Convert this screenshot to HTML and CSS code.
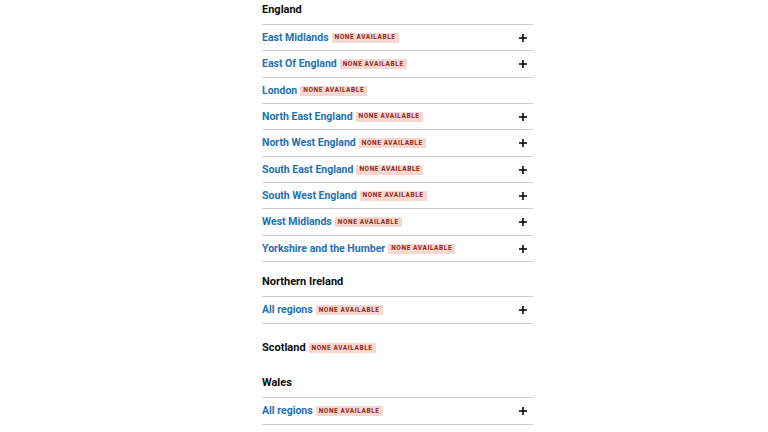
FILE: index.html
```html
<!DOCTYPE html>
<html lang="en">
<head>
<meta charset="utf-8">
<title>Regions</title>
<link rel="stylesheet" href="styles.css">
</head>
<body>
<main class="page">
  <section class="nation">
    <h2 class="nation-title">England</h2>
    <ul class="regions">
      <li class="region"><span class="region-name"><a class="link" href="#">East Midlands</a><strong class="tag">None available</strong></span><span class="plus"><svg viewBox="0 0 8 8" width="8" height="8"><rect x="3.2" y="0" width="1.6" height="8"/><rect x="0" y="3.2" width="8" height="1.6"/></svg></span></li>
      <li class="region"><span class="region-name"><a class="link" href="#">East Of England</a><strong class="tag">None available</strong></span><span class="plus"><svg viewBox="0 0 8 8" width="8" height="8"><rect x="3.2" y="0" width="1.6" height="8"/><rect x="0" y="3.2" width="8" height="1.6"/></svg></span></li>
      <li class="region"><span class="region-name"><a class="link" href="#">London</a><strong class="tag">None available</strong></span></li>
      <li class="region"><span class="region-name"><a class="link" href="#">North East England</a><strong class="tag">None available</strong></span><span class="plus"><svg viewBox="0 0 8 8" width="8" height="8"><rect x="3.2" y="0" width="1.6" height="8"/><rect x="0" y="3.2" width="8" height="1.6"/></svg></span></li>
      <li class="region"><span class="region-name"><a class="link" href="#">North West England</a><strong class="tag">None available</strong></span><span class="plus"><svg viewBox="0 0 8 8" width="8" height="8"><rect x="3.2" y="0" width="1.6" height="8"/><rect x="0" y="3.2" width="8" height="1.6"/></svg></span></li>
      <li class="region"><span class="region-name"><a class="link" href="#">South East England</a><strong class="tag">None available</strong></span><span class="plus"><svg viewBox="0 0 8 8" width="8" height="8"><rect x="3.2" y="0" width="1.6" height="8"/><rect x="0" y="3.2" width="8" height="1.6"/></svg></span></li>
      <li class="region"><span class="region-name"><a class="link" href="#">South West England</a><strong class="tag">None available</strong></span><span class="plus"><svg viewBox="0 0 8 8" width="8" height="8"><rect x="3.2" y="0" width="1.6" height="8"/><rect x="0" y="3.2" width="8" height="1.6"/></svg></span></li>
      <li class="region"><span class="region-name"><a class="link" href="#">West Midlands</a><strong class="tag">None available</strong></span><span class="plus"><svg viewBox="0 0 8 8" width="8" height="8"><rect x="3.2" y="0" width="1.6" height="8"/><rect x="0" y="3.2" width="8" height="1.6"/></svg></span></li>
      <li class="region"><span class="region-name"><a class="link" href="#">Yorkshire and the Humber</a><strong class="tag">None available</strong></span><span class="plus"><svg viewBox="0 0 8 8" width="8" height="8"><rect x="3.2" y="0" width="1.6" height="8"/><rect x="0" y="3.2" width="8" height="1.6"/></svg></span></li>
    </ul>
  </section>
  <section class="nation">
    <h2 class="nation-title">Northern Ireland</h2>
    <ul class="regions">
      <li class="region"><span class="region-name"><a class="link" href="#">All regions</a><strong class="tag">None available</strong></span><span class="plus"><svg viewBox="0 0 8 8" width="8" height="8"><rect x="3.2" y="0" width="1.6" height="8"/><rect x="0" y="3.2" width="8" height="1.6"/></svg></span></li>
    </ul>
  </section>
  <section class="nation">
    <h2 class="nation-title nation-title--tagged">Scotland<strong class="tag">None available</strong></h2>
  </section>
  <section class="nation">
    <h2 class="nation-title">Wales</h2>
    <ul class="regions">
      <li class="region"><span class="region-name"><a class="link" href="#">All regions</a><strong class="tag">None available</strong></span><span class="plus"><svg viewBox="0 0 8 8" width="8" height="8"><rect x="3.2" y="0" width="1.6" height="8"/><rect x="0" y="3.2" width="8" height="1.6"/></svg></span></li>
    </ul>
  </section>
</main>
</body>
</html>
```
FILE: styles.css
```css
* { box-sizing: border-box; }
html, body { margin: 0; padding: 0; background: #ffffff; }
body {
  font-family: Roboto, "Liberation Sans", Arial, sans-serif;
  color: #0b0c0c;
}
.page {
  width: 271px;
  margin-left: 262px;
  padding-top: 2.5px;
}
.nation { padding-top: 13px; }
.nation:first-child { padding-top: 0; }
.nation-title {
  margin: 0 0 7.5px;
  font-size: 11px;
  line-height: 14px;
  font-weight: 700;
  display: flex;
  align-items: center;
}
.nation-title--tagged { padding-top: 4.5px; }
.regions {
  list-style: none;
  margin: 0;
  padding: 0;
  border-top: 1px solid #c9cbcc;
}
.region {
  height: 26.33px;
  border-bottom: 1px solid #c9cbcc;
  display: flex;
  align-items: center;
  justify-content: space-between;
  padding: 0.5px 6px 0 0;
}
.region-name { display: flex; align-items: center; }
.link {
  color: #1d70b8;
  font-size: 10.5px;
  line-height: 14px;
  font-weight: 700;
  text-decoration: none;
}
.tag {
  margin-left: 3px;
  background: #f6d7d2;
  color: #942514;
  font-size: 6.5px;
  line-height: 9.5px;
  font-weight: 700;
  text-transform: uppercase;
  letter-spacing: 0.6px;
  padding: 0.5px 3px 0;
  display: inline-block;
}
.plus { display: flex; }
.plus svg { fill: #0b0c0c; display: block; }
```
